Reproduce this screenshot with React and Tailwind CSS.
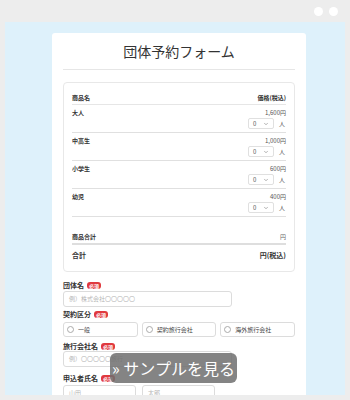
import { ChevronDown } from "lucide-react";

const items = [
  { name: "大人", price: "1,600円" },
  { name: "中高生", price: "1,000円" },
  { name: "小学生", price: "600円" },
  { name: "幼児", price: "400円" },
];

const Badge = () => (
  <span className="ml-[3px] inline-flex items-center rounded-[3px] bg-[#e0393e] px-[2px] h-[7px] text-[5px] leading-none text-white font-bold">
    必須
  </span>
);

const Label = ({ children }) => (
  <div className="flex items-center h-[10px] text-[7px] font-bold text-[#333]">
    {children}
    <Badge />
  </div>
);

const Input = ({ placeholder, className = "" }) => (
  <div
    className={`h-[16px] border border-[#dcdcdc] rounded-[3px] flex items-center px-[5px] text-[6px] leading-none text-[#b5b5b5] ${className}`}
  >
    {placeholder}
  </div>
);

export default function App() {
  return (
    <div
      className="relative w-[350px] h-[400px] bg-[#ededed] overflow-hidden flex flex-col"
      style={{ fontFamily: '"Noto Sans CJK JP", "Noto Sans", sans-serif' }}
    >
      {/* window bar */}
      <div className="h-[22px] flex items-center justify-end gap-[6px] pr-[12px]">
        <span className="w-[9px] h-[9px] rounded-full bg-white" />
        <span className="w-[9px] h-[9px] rounded-full bg-white" />
      </div>

      {/* page */}
      <div className="mx-[5px] h-[373px] bg-[#def1fb] overflow-hidden pt-[11px]">
        <div className="ml-[47px] w-[254px] bg-white rounded-t-[3px] px-[11px] h-[400px]">
          <div className="pt-[8px] pb-[8px] text-center text-[14px] leading-[20px] text-[#333] border-b border-[#e6e6e6]">
            団体予約フォーム
          </div>

          {/* price table */}
          <div className="mt-[12px] border border-[#e8e8e8] rounded-[4px] px-[8px] pt-[10px] pb-[10px] text-[#333] leading-none">
            <div className="flex justify-between h-[10px] items-center text-[6px] font-bold border-b border-[#e6e6e6] pb-[1px] box-content">
              <span>商品名</span>
              <span>価格(税込)</span>
            </div>
            {items.map((it) => (
              <div key={it.name} className="border-b border-[#e0e0e0] pt-[3px] pb-[3px]">
                <div className="flex justify-between items-center h-[9px] text-[6px]">
                  <span className="font-bold">{it.name}</span>
                  <span className="text-[#555]">{it.price}</span>
                </div>
                <div className="mt-[1px] flex justify-end items-center gap-[5px]">
                  <div className="w-[26px] h-[11px] border border-[#e0e0e0] rounded-[2px] flex items-center justify-between px-[4px] text-[6px] text-[#555]">
                    <span>0</span>
                    <ChevronDown size={6} strokeWidth={2} className="text-[#666]" />
                  </div>
                  <span className="text-[6px] text-[#555] pr-[1px]">人</span>
                </div>
              </div>
            ))}
            <div className="mt-[15px] flex justify-between items-center h-[10px] text-[6px] pb-[1px] border-b-2 border-[#dedede] box-content">
              <span className="font-bold">商品合計</span>
              <span className="text-[#666]">円</span>
            </div>
            <div className="mt-[4px] flex justify-between items-center h-[12px] text-[7px] font-bold">
              <span>合計</span>
              <span>円(税込)</span>
            </div>
          </div>

          {/* form */}
          <div className="mt-[8px] flex flex-col">
            <Label>団体名</Label>
            <Input placeholder="例）株式会社〇〇〇〇〇" className="mt-[1px] w-[169px]" />

            <div className="mt-[2px]">
              <Label>契約区分</Label>
            </div>
            <div className="mt-[3px] grid grid-cols-3 gap-[4px]">
              {["一般", "契約旅行会社", "海外旅行会社"].map((t) => (
                <div
                  key={t}
                  className="h-[15px] border border-[#dcdcdc] rounded-[3px] flex items-center gap-[4px] px-[3px] text-[6px] leading-none text-[#444]"
                >
                  <span className="w-[7px] h-[7px] rounded-full border border-[#aaa]" />
                  {t}
                </div>
              ))}
            </div>

            <div className="mt-[4px]">
              <Label>旅行会社名</Label>
            </div>
            <Input placeholder="例）〇〇〇〇〇旅行" className="mt-[0px] w-[169px]" />

            <div className="mt-[6px]">
              <Label>申込者氏名</Label>
            </div>
            <div className="mt-[2px] flex gap-[6px]">
              <Input placeholder="山田" className="w-[73px]" />
              <Input placeholder="太郎" className="w-[73px]" />
            </div>
          </div>
        </div>
      </div>

      {/* overlay button */}
      <div className="absolute left-[110px] top-[353px] w-[127px] h-[30px] rounded-[6px] bg-[#6e6e6e]/85 flex items-center justify-center whitespace-nowrap text-white text-[16px] leading-none">
        » サンプルを見る
      </div>
    </div>
  );
}
